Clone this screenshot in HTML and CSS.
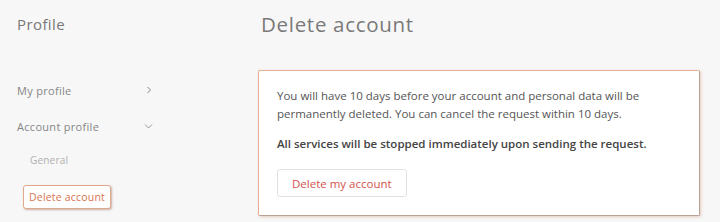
FILE: index.html
```html
<!DOCTYPE html>
<html lang="en">

<head>
    <meta charset="UTF-8">
    <meta name="viewport" content="width=device-width, initial-scale=1.0">
    <title>Delete account</title>
    <link rel="stylesheet" href="styles.css">
</head>

<body>
    <div class="page">

        <div class="sidebar">
            <h2 class="sidebar-title">Profile</h2>

            <div class="nav">
                <div class="nav-item">
                    <span>My profile</span>
                    <svg class="chevron" width="8" height="8" viewBox="0 0 8 8">
                        <path d="M2.5 1 L5.5 4 L2.5 7" fill="none" stroke="#888" stroke-width="1"/>
                    </svg>
                </div>
                <div class="nav-item">
                    <span>Account profile</span>
                    <svg class="chevron" width="9" height="8" viewBox="0 0 9 8">
                        <path d="M1 2.5 L4.5 6 L8 2.5" fill="none" stroke="#999" stroke-width="1"/>
                    </svg>
                </div>
                <div class="sub-nav">
                    <div class="sub-item">General</div>
                    <div class="sub-item active">Delete account</div>
                </div>
            </div>
        </div>

        <div class="main">
            <h1 class="main-title">Delete account</h1>

            <div class="card">
                <p class="card-text">You will have 10 days before your account and personal data will be permanently deleted. You can cancel the request within 10 days.</p>
                <p class="card-warning">All services will be stopped immediately upon sending the request.</p>
                <button class="delete-btn">Delete my account</button>
            </div>
        </div>

    </div>
</body>

</html>
```

FILE: styles.css
```css
body {
    margin: 0;
    background: #f7f7f7;
    font-family: 'Open Sans', 'Lato', sans-serif;
    height: 222px;
    overflow: hidden;
}

.page {
    display: flex;
    flex-direction: row;
    height: 222px;
}

.sidebar {
    width: 242px;
    padding: 0 0 0 17px;
    box-sizing: border-box;
}

.sidebar-title {
    margin: 14px 0 0 0;
    font-size: 15px;
    font-weight: 500;
    color: #777;
    line-height: 20px;
    letter-spacing: 0.4px;
}

.nav {
    margin-top: 38px;
    width: 136px;
}

.nav-item {
    display: flex;
    justify-content: space-between;
    align-items: center;
    height: 36px;
    font-size: 11px;
    color: #868686;
    letter-spacing: 0.3px;
}

.sub-item {
    font-size: 10px;
    color: #b0b0b0;
    padding-left: 13px;
    height: 32px;
    line-height: 32px;
    letter-spacing: 0.2px;
}

.sub-item.active {
    display: inline-block;
    margin-left: 6px;
    margin-top: 9px;
    padding: 0 5px;
    height: 22px;
    line-height: 22px;
    font-size: 10.5px;
    color: #d8734f;
    background: #fff;
    border: 1.5px solid #e2a98c;
    border-radius: 3px;
    box-shadow: 1px 1px 2px rgba(150, 110, 90, 0.5);
}

.main {
    flex: 1;
    padding-right: 20px;
}

.main-title {
    margin: 11px 0 0 20px;
    font-size: 20.5px;
    font-weight: 500;
    color: #7a7a7a;
    line-height: 26px;
    letter-spacing: 0.7px;
}

.card {
    margin-top: 33px;
    margin-left: 17px;
    background: #fff;
    border: 1.5px solid #e6b095;
    border-right-color: #b9a196;
    border-bottom-color: #b9a196;
    border-radius: 2px;
    box-shadow: 1px 1px 3px rgba(200, 140, 110, 0.4);
    padding: 16px 18px 16px 18px;
    width: 442px;
    box-sizing: border-box;
    height: 146px;
}

.card-text {
    margin: 0;
    font-size: 11.5px;
    line-height: 18px;
    color: #555;
    max-width: 380px;
}

.card-warning {
    margin: 12px 0 0 0;
    font-size: 11.5px;
    font-weight: 600;
    color: #444;
    line-height: 18px;
}

.delete-btn {
    margin-top: 16px;
    font-family: inherit;
    font-size: 11.5px;
    color: #d4524c;
    background: #fff;
    border: 1px solid #e4e0e0;
    border-radius: 3px;
    padding: 0 14px;
    height: 28px;
}
```
